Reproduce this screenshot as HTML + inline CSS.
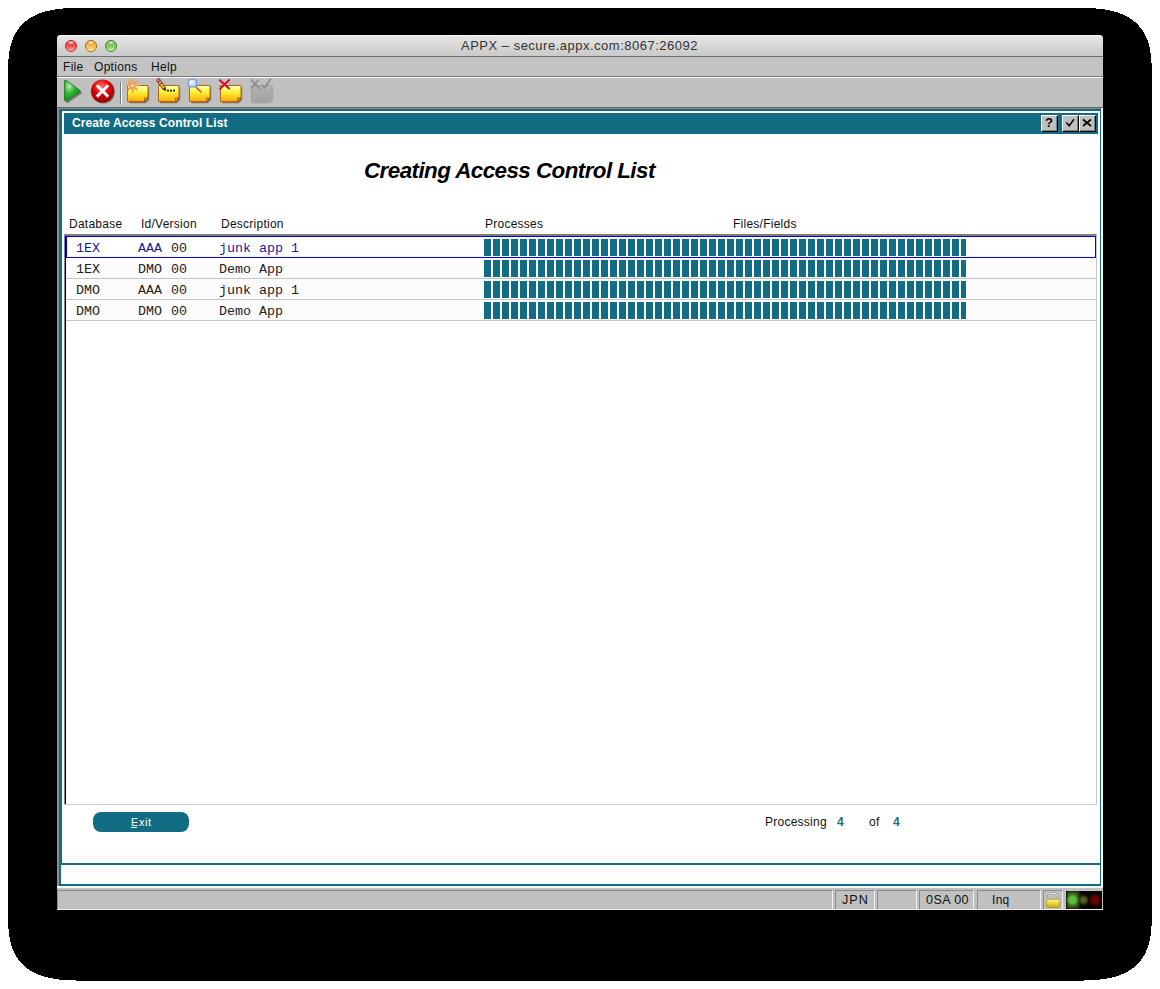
<!DOCTYPE html>
<html><head><meta charset="utf-8">
<style>
*{margin:0;padding:0;box-sizing:border-box}
html,body{width:1160px;height:989px;overflow:hidden;background:#fff;font-family:"Liberation Sans",sans-serif;position:relative}
.a{position:absolute}
#shadow{position:absolute;left:0;top:0}
#win{position:absolute;left:57px;top:35px;width:1046px;height:875px;background:#c0c0c0;border-radius:4px 4px 0 0;overflow:hidden}
#title{position:absolute;left:0;top:0;width:1046px;height:21px;background:linear-gradient(#f2f2f2 0,#f2f2f2 1px,#e4e4e4 2px,#c9c9c9 21px);border-bottom:none}
#titleline{position:absolute;left:0;top:21px;width:1046px;height:1px;background:#6e6e6e}
#title .t{position:absolute;left:404px;top:3px;font-size:13px;letter-spacing:0.5px;color:#333;white-space:nowrap}
.tl{position:absolute;top:5px;width:12px;height:12px;border-radius:50%}
#menu{position:absolute;left:0;top:22px;width:1046px;height:19px;background:#c3c3c3;font-size:12px;color:#111}
#menuline{position:absolute;left:0;top:41px;width:1046px;height:1px;background:#777}
#menuw{position:absolute;left:0;top:42px;width:1046px;height:1px;background:#fafafa}
#menu span{position:absolute;top:3px;letter-spacing:0.3px}
#tool{position:absolute;left:0;top:43px;width:1046px;height:29px;background:#c0c0c0}
#toolline{position:absolute;left:0;top:72px;width:1046px;height:2px;background:linear-gradient(#6a6462 0,#6a6462 1px,#8c8684 1px)}
.teal{background:#126c83}

.btn{width:17px;height:17px;background:#c0c0c0;border-top:1px solid #fff;border-left:1px solid #fff;border-right:1px solid #000;border-bottom:1px solid #000;box-shadow:inset -1px -1px 0 #808080}
.btn span{position:absolute;left:3px;top:-1px;font-size:13px;font-weight:bold;color:#000;line-height:16px}
.hdr{top:217px;font-size:12px;line-height:14px;color:#111;white-space:nowrap;letter-spacing:0.25px}
.mono{font-family:"Liberation Mono",monospace;font-size:13.33px;line-height:16px;color:#222;white-space:pre}
.sel{color:#1c1c90}
.row{left:66px;width:1030px;height:21px;background:#fcfcfc;border-bottom:1px solid #c4c4c4}
.prog{left:484px;width:482px;height:17px;background:repeating-linear-gradient(90deg,#126c83 0,#126c83 7px,transparent 7px,transparent 9px)}
.sp{top:890px;height:20px;border-top:1px solid #8a8a8a;border-left:1px solid #8a8a8a;border-right:1px solid #f0f0f0;border-bottom:1px solid #f0f0f0}
.sp span{position:absolute;top:2px;font-size:12px;color:#111;line-height:14px}
</style></head><body>
<svg id="shadow" width="1160" height="989" shape-rendering="crispEdges"><path d="M1071.80 7.80 L1081.04 7.84 L1086.46 7.94 L1091.00 8.12 L1095.03 8.38 L1098.71 8.70 L1102.13 9.10 L1105.34 9.56 L1108.37 10.10 L1111.24 10.71 L1113.97 11.40 L1116.57 12.16 L1119.06 12.98 L1121.43 13.88 L1123.70 14.86 L1125.86 15.90 L1127.94 17.02 L1129.91 18.22 L1131.80 19.48 L1133.59 20.82 L1135.30 22.24 L1136.92 23.73 L1138.45 25.30 L1139.90 26.95 L1141.26 28.68 L1142.54 30.49 L1143.73 32.39 L1144.85 34.37 L1145.88 36.45 L1146.82 38.63 L1147.69 40.90 L1148.47 43.29 L1149.17 45.80 L1149.78 48.45 L1150.32 51.26 L1150.77 54.25 L1151.14 57.48 L1151.43 61.00 L1151.64 64.97 L1151.76 69.71 L1151.80 77.80 L1151.80 910.60 L1151.76 918.69 L1151.64 923.43 L1151.43 927.40 L1151.14 930.92 L1150.77 934.15 L1150.32 937.14 L1149.78 939.95 L1149.17 942.60 L1148.47 945.11 L1147.69 947.50 L1146.82 949.77 L1145.88 951.95 L1144.85 954.03 L1143.73 956.01 L1142.54 957.91 L1141.26 959.72 L1139.90 961.45 L1138.45 963.10 L1136.92 964.67 L1135.30 966.16 L1133.59 967.58 L1131.80 968.92 L1129.91 970.18 L1127.94 971.38 L1125.86 972.50 L1123.70 973.54 L1121.43 974.52 L1119.06 975.42 L1116.57 976.24 L1113.97 977.00 L1111.24 977.69 L1108.37 978.30 L1105.34 978.84 L1102.13 979.30 L1098.71 979.70 L1095.03 980.02 L1091.00 980.28 L1086.46 980.46 L1081.04 980.56 L1071.80 980.60 L88.00 980.60 L78.76 980.56 L73.34 980.46 L68.80 980.28 L64.77 980.02 L61.09 979.70 L57.67 979.30 L54.46 978.84 L51.43 978.30 L48.56 977.69 L45.83 977.00 L43.23 976.24 L40.74 975.42 L38.37 974.52 L36.10 973.54 L33.94 972.50 L31.86 971.38 L29.89 970.18 L28.00 968.92 L26.21 967.58 L24.50 966.16 L22.88 964.67 L21.35 963.10 L19.90 961.45 L18.54 959.72 L17.26 957.91 L16.07 956.01 L14.95 954.03 L13.92 951.95 L12.98 949.77 L12.11 947.50 L11.33 945.11 L10.63 942.60 L10.02 939.95 L9.48 937.14 L9.03 934.15 L8.66 930.92 L8.37 927.40 L8.16 923.43 L8.04 918.69 L8.00 910.60 L8.00 77.80 L8.04 69.71 L8.16 64.97 L8.37 61.00 L8.66 57.48 L9.03 54.25 L9.48 51.26 L10.02 48.45 L10.63 45.80 L11.33 43.29 L12.11 40.90 L12.98 38.63 L13.92 36.45 L14.95 34.37 L16.07 32.39 L17.26 30.49 L18.54 28.68 L19.90 26.95 L21.35 25.30 L22.88 23.73 L24.50 22.24 L26.21 20.82 L28.00 19.48 L29.89 18.22 L31.86 17.02 L33.94 15.90 L36.10 14.86 L38.37 13.88 L40.74 12.98 L43.23 12.16 L45.83 11.40 L48.56 10.71 L51.43 10.10 L54.46 9.56 L57.67 9.10 L61.09 8.70 L64.77 8.38 L68.80 8.12 L73.34 7.94 L78.76 7.84 L88.00 7.80Z" fill="#000"/></svg>
<div id="win">
  <div id="title">
    <svg class="a" style="left:0;top:0" width="70" height="21">
<defs>
<linearGradient id="tr" x1="0" y1="0" x2="0" y2="1"><stop offset="0" stop-color="#e85a5a"/><stop offset="0.5" stop-color="#f24a48"/><stop offset="1" stop-color="#f8b8b8"/></linearGradient>
<linearGradient id="ty" x1="0" y1="0" x2="0" y2="1"><stop offset="0" stop-color="#eea048"/><stop offset="0.5" stop-color="#f4b452"/><stop offset="1" stop-color="#fff0a0"/></linearGradient>
<linearGradient id="tg" x1="0" y1="0" x2="0" y2="1"><stop offset="0" stop-color="#78c050"/><stop offset="0.5" stop-color="#7cc858"/><stop offset="1" stop-color="#d0f4b0"/></linearGradient>
<radialGradient id="hl" cx="0.5" cy="0.5" r="0.5"><stop offset="0" stop-color="#fff" stop-opacity="0.95"/><stop offset="1" stop-color="#fff" stop-opacity="0"/></radialGradient>
</defs>
<circle cx="14" cy="11" r="6.3" fill="#fff" opacity="0.35"/>
<circle cx="14" cy="11" r="5.6" fill="url(#tr)" stroke="#9a3030" stroke-width="0.9"/>
<ellipse cx="14" cy="7.6" rx="3.2" ry="1.6" fill="url(#hl)"/>
<circle cx="34" cy="11" r="6.3" fill="#fff" opacity="0.35"/>
<circle cx="34" cy="11" r="5.6" fill="url(#ty)" stroke="#9a6818" stroke-width="0.9"/>
<ellipse cx="34" cy="7.6" rx="3.2" ry="1.6" fill="url(#hl)"/>
<circle cx="54" cy="11" r="6.3" fill="#fff" opacity="0.35"/>
<circle cx="54" cy="11" r="5.6" fill="url(#tg)" stroke="#3e7a2c" stroke-width="0.9"/>
<ellipse cx="54" cy="7.6" rx="3.2" ry="1.6" fill="url(#hl)"/>
</svg>
<div class="t">APPX – secure.appx.com:8067:26092</div>
  </div>
  <div id="titleline"></div>
  <div id="menu"><span style="left:6px">File</span><span style="left:37px">Options</span><span style="left:94px">Help</span></div>
  <div id="menuline"></div><div id="menuw"></div>
  <div id="tool"></div>
  <div id="toolline"></div>
  <!-- content -->
  <div class="a" style="left:0;top:73px;width:2px;height:778px;background:#8c8c8c"></div>
  <div class="a teal" style="left:2px;top:74px;width:1042px;height:777px"></div>
  <div class="a" style="left:1044px;top:73px;width:2px;height:778px;background:#fff"></div>
  <div class="a" style="left:5px;top:76px;width:1038px;height:752px;background:#fff"></div>
  <div class="a teal" style="left:7px;top:78px;width:1034px;height:21px"></div>
  <div class="a" style="left:15px;top:81px;font-size:12px;font-weight:bold;color:#fff;line-height:14px;letter-spacing:0.1px">Create Access Control List</div>
  <div class="a" style="left:4px;top:830px;width:1039px;height:19px;background:#fff"></div>
  <div class="a" style="left:0;top:851px;width:1046px;height:2px;background:#f4f4f4"></div>
  <div class="a" style="left:0;top:874px;width:1046px;height:1px;background:#f4f4f4"></div>
</div>

<!-- PAGE LAYER -->
<svg class="a" style="left:0;top:0" width="1160" height="989">
<defs>
<radialGradient id="gplay" cx="0.3" cy="0.3" r="0.8"><stop offset="0" stop-color="#c0ecb8"/><stop offset="0.4" stop-color="#38b438"/><stop offset="1" stop-color="#078a14"/></radialGradient>
<radialGradient id="gred" cx="0.45" cy="0.3" r="0.75"><stop offset="0" stop-color="#ff6a6a"/><stop offset="0.45" stop-color="#e00808"/><stop offset="1" stop-color="#8a0000"/></radialGradient>
<linearGradient id="gnote" x1="0" y1="0" x2="0" y2="1"><stop offset="0" stop-color="#fffbd0"/><stop offset="0.35" stop-color="#fff844"/><stop offset="1" stop-color="#ffa800"/></linearGradient>
<linearGradient id="ggray" x1="0" y1="0" x2="0" y2="1"><stop offset="0" stop-color="#b4b4b4"/><stop offset="1" stop-color="#a2a2a2"/></linearGradient>
<radialGradient id="glens" cx="0.4" cy="0.4" r="0.6"><stop offset="0" stop-color="#ffffff"/><stop offset="1" stop-color="#9cd0f0"/></radialGradient>
</defs>
<!-- play -->
<path d="M66.5 81.5 Q65 80 65 82.5 L65 100 Q65 102.5 67 101.5 L80 92.5 Q81.5 91.5 80 90.5 Z" fill="#3a3a3a" opacity="0.55" transform="translate(1.2,1.2)"/>
<path d="M66.5 80.5 Q64.5 79 64.5 81.5 L64.5 99.5 Q64.5 102 66.5 100.8 L79.5 92 Q81 91 79.5 90 Z" fill="url(#gplay)" stroke="#0a7a18" stroke-width="0.8"/>
<!-- red x -->
<circle cx="103.5" cy="92" r="11.5" fill="#222" opacity="0.45"/>
<circle cx="102.5" cy="91" r="11.6" fill="url(#gred)"/>
<path d="M96.8 85.2 L108.2 96.6 M108.2 85.2 L96.8 96.6" stroke="#f4f8f8" stroke-width="3" stroke-linecap="butt"/>
<!-- separator -->
<rect x="120" y="82" width="1" height="22" fill="#777"/><rect x="121" y="82" width="1" height="22" fill="#fff"/>
<!-- notes -->
<g id="note1">
<path d="M128 86 h20 v12.5 l-3.5 3.5 h-16.5 z" fill="#5a3000" opacity="0.55" transform="translate(1.2,1.2)"/>
<path d="M127.5 85.5 h20.5 v12.5 l-3.5 3.5 h-17 z" fill="url(#gnote)" stroke="#b06a10" stroke-width="1"/>
<path d="M144.5 101.5 v-3.5 h3.5 z" fill="#e8b020" stroke="#a05a08" stroke-width="0.9"/>
</g>
<use href="#note1" x="31"/>
<use href="#note1" x="62"/>
<use href="#note1" x="93"/>
<!-- star -->
<g stroke="#eea050" stroke-width="2.1" stroke-linecap="round">
<path d="M132.5 79.5 v12 M126.5 85.5 h12 M128.3 81.3 l8.4 8.4 M136.7 81.3 l-8.4 8.4"/>
</g>
<circle cx="132.5" cy="85.5" r="1.6" fill="#f8e0c0"/>
<!-- pencil -->
<path d="M162 82.4 L165.6 87.5 L162.8 89.5 L159.2 84.4 Z" fill="#f49a18" stroke="#5a3000" stroke-width="0.7"/>
<path d="M165.6 87.5 L165.9 91 L162.8 89.5 Z" fill="#111"/>
<path d="M160.7 80.6 L162 82.4 L159.2 84.4 L157.9 82.6 Z" fill="#c8c8c8" stroke="#222" stroke-width="0.7"/>
<path d="M159.4 78.6 L160.7 80.6 L157.9 82.6 L156.6 80.6 Q156.8 78.2 159.4 78.6 Z" fill="#e8706a" stroke="#8a2020" stroke-width="0.8"/>
<rect x="167" y="89.6" width="2" height="2" fill="#3a3a20"/><rect x="170" y="89.6" width="2" height="2" fill="#3a3a20"/><rect x="173" y="89.6" width="2" height="2" fill="#3a3a20"/>
<!-- magnifier -->
<path d="M195.5 86.5 l5.5 5.5" stroke="#b06028" stroke-width="1.6" stroke-linecap="round"/>
<rect x="188.3" y="79.3" width="8.4" height="7.6" rx="3.2" fill="url(#glens)" stroke="#7898d8" stroke-width="1.1"/>
<!-- red x small -->
<path d="M219.8 80.2 L229 88.6 M229.2 80 L220.2 88.8" stroke="#d41028" stroke-width="2" stroke-linecap="round"/>
<!-- disabled icon -->
<path d="M252 86.5 h20.5 v13 l-3.5 3 h-17 z" fill="#8a8a8a" opacity="0.35" transform="translate(1,1)"/><path d="M251.5 85.5 h20.5 v13 l-3.5 3.5 h-17 z" fill="url(#ggray)" stroke="#a0a0a0" stroke-width="1"/><path d="M268.5 102 v-3.5 h3.5" fill="none" stroke="#a8a8a8" stroke-width="0.8"/>
<path d="M251.5 80 l8 8.5 M258.5 80 l-7 8" stroke="#8e8e8e" stroke-width="1.8" stroke-linecap="round"/>
<path d="M262 85 l2.5 3 l6-9" stroke="#8e8e8e" stroke-width="1.8" fill="none" stroke-linecap="round"/>
</svg>

<!-- title buttons -->
<div class="a btn" style="left:1041px;top:115px"><span>?</span></div>
<div class="a btn" style="left:1062px;top:115px"><svg width="15" height="15" class="a" style="left:1px;top:1px"><path d="M2.4 5.6 l2.8 3.2 l4.8 -6.6" stroke="#000" stroke-width="1.5" fill="none"/></svg></div>
<div class="a btn" style="left:1079px;top:115px"><svg width="15" height="15" class="a" style="left:1px;top:1px"><path d="M2 2.5 L10 9 M10 2.5 L2 9" stroke="#000" stroke-width="1.7" fill="none"/></svg></div>

<!-- heading -->
<div class="a" style="left:364px;top:158px;font-size:22.4px;letter-spacing:-0.56px;font-weight:bold;font-style:italic;color:#000;line-height:26px;white-space:nowrap">Creating Access Control List</div>

<!-- column headers -->
<div class="a hdr" style="left:69px">Database</div>
<div class="a hdr" style="left:141px">Id/Version</div>
<div class="a hdr" style="left:221px">Description</div>
<div class="a hdr" style="left:485px">Processes</div>
<div class="a hdr" style="left:733px">Files/Fields</div>

<!-- list box -->
<div class="a" style="left:64px;top:234px;width:1033px;height:571px;background:#fff;border-top:1px solid #7f7f78;border-left:1px solid #888;border-right:1px solid #c8c8c8;border-bottom:1px solid #c8c8c8"></div>
<div class="a" style="left:65px;top:235px;width:1px;height:569px;background:#000"></div>
<div class="a" style="left:65px;top:235px;width:1031px;height:1px;background:#7f7f78"></div>
<div class="a row" style="top:258px"></div>
<div class="a row" style="top:279px"></div>
<div class="a row" style="top:300px"></div>
<div class="a" style="left:66px;top:236px;width:1030px;height:22px;border:1px solid #0000f0;background:#fff"></div>

<div class="a mono sel" style="left:76px;top:241px">1EX</div><div class="a mono sel" style="left:138px;top:241px">AAA</div><div class="a mono" style="left:171px;top:241px">00</div><div class="a mono sel" style="left:219px;top:241px">junk app 1</div>
<div class="a mono" style="left:76px;top:262px">1EX</div><div class="a mono" style="left:138px;top:262px">DMO</div><div class="a mono" style="left:171px;top:262px">00</div><div class="a mono" style="left:219px;top:262px">Demo App</div>
<div class="a mono" style="left:76px;top:283px">DMO</div><div class="a mono" style="left:138px;top:283px">AAA</div><div class="a mono" style="left:171px;top:283px">00</div><div class="a mono" style="left:219px;top:283px">junk app 1</div>
<div class="a mono" style="left:76px;top:304px">DMO</div><div class="a mono" style="left:138px;top:304px">DMO</div><div class="a mono" style="left:171px;top:304px">00</div><div class="a mono" style="left:219px;top:304px">Demo App</div>
<div class="a prog" style="top:239px"></div>
<div class="a prog" style="top:260px"></div>
<div class="a prog" style="top:281px"></div>
<div class="a prog" style="top:302px"></div>

<!-- exit button -->
<div class="a teal" style="left:93px;top:812px;width:96px;height:20px;border-radius:8px"></div>
<div class="a" style="left:131px;top:815px;font-size:11px;letter-spacing:0.6px;color:#fff;line-height:14px;width:26px;white-space:nowrap">Exit</div><div class="a" style="left:131px;top:827px;width:6px;height:1px;background:#f4f4f4"></div>

<!-- processing -->
<div class="a hdr" style="left:765px;top:815px">Processing</div>
<div class="a hdr" style="left:837px;top:815px;font-weight:bold;color:#1a6e86">4</div>
<div class="a hdr" style="left:869px;top:815px">of</div>
<div class="a hdr" style="left:893px;top:815px;font-weight:bold;color:#1a6e86">4</div>

<!-- status bar -->
<div class="a sp" style="left:57px;width:776px"></div>
<div class="a sp" style="left:835px;width:40px"><span style="left:6px;letter-spacing:1px;font-size:12.6px">JPN</span></div>
<div class="a sp" style="left:877px;width:40px"></div>
<div class="a sp" style="left:919px;width:55px"><span style="left:6px;letter-spacing:0.4px;font-size:12.6px">0SA 00</span></div>
<div class="a sp" style="left:977px;width:64px"><span style="left:14px;letter-spacing:0.3px">Inq</span></div>
<div class="a sp" style="left:1043px;width:20px"></div>
<svg class="a" style="left:1043px;top:890px" width="20" height="19">
<defs><linearGradient id="glock" x1="0" y1="0" x2="0" y2="1"><stop offset="0" stop-color="#fff8a0"/><stop offset="0.5" stop-color="#e8d830"/><stop offset="1" stop-color="#c0a818"/></linearGradient></defs>
<path d="M5 10 v-2 a5 4.6 0 0 1 10 0 v2" stroke="#686868" stroke-width="2.2" fill="none"/>
<path d="M5 10 v-2 a5 4.6 0 0 1 10 0 v2" stroke="#f4f4f4" stroke-width="1.1" fill="none"/>
<rect x="3.3" y="9.3" width="13.4" height="8.2" rx="1" fill="url(#glock)" stroke="#a89018" stroke-width="0.7"/>
</svg>
<svg class="a" style="left:1066px;top:891px" width="36" height="18">
<defs><filter id="bl" x="-50%" y="-50%" width="200%" height="200%"><feGaussianBlur stdDeviation="0.9"/></filter></defs>
<rect x="0" y="0" width="36" height="18" fill="#080500"/>
<rect x="1" y="0.5" width="12" height="17" fill="#3e5a12" filter="url(#bl)"/>
<circle cx="6.5" cy="9" r="5" fill="#56c43a" filter="url(#bl)"/>
<circle cx="17.5" cy="9" r="4.2" fill="#5c5c22" filter="url(#bl)"/>
<circle cx="29" cy="9" r="5" fill="#6e0404" filter="url(#bl)"/>
</svg>
</body></html>
